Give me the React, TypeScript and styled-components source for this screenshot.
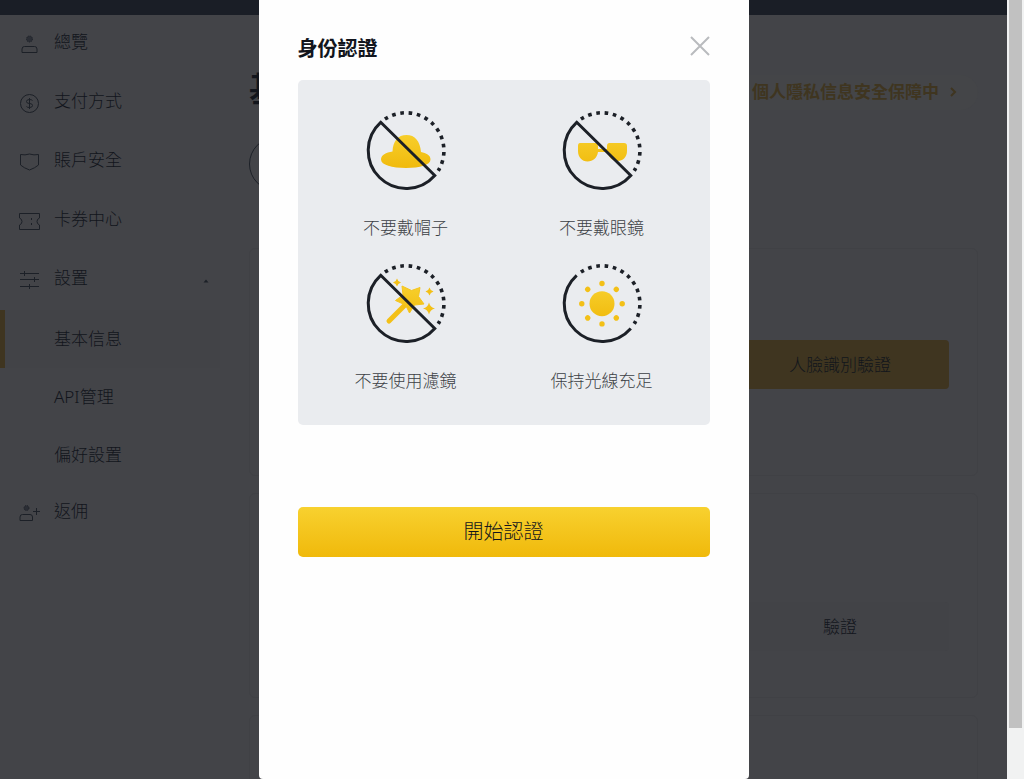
import React from "react";
import styled, { createGlobalStyle } from "styled-components";

const GlobalStyle = createGlobalStyle`
  * { box-sizing: border-box; }
  body {
    margin: 0;
    background: #434448;
    color: #12151c;
    font-family: "Noto Sans", "Noto Sans CJK TC", sans-serif;
    font-size: 17px;
    font-weight: 300;
    line-height: 24px;
  }
  button { font: inherit; color: inherit; border: 0; padding: 0; cursor: pointer; }
`;

const Shell = styled.div`
  display: flex;
  height: 100vh;
  overflow: hidden;
`;

const Page = styled.div`
  position: relative;
  flex: 1;
  min-width: 0;
  overflow: hidden;
`;

const ScrollTrack = styled.div`
  flex: none;
  width: 17px;
  padding: 0 2px;
  background: #f1f2f2;
`;

const ScrollThumb = styled.div`
  width: 13px;
  height: 93.5%;
  background: #c1c1c1;
`;

const TopBar = styled.header`
  height: 15px;
  background: #1a1e26;
`;

const Body = styled.div`
  display: flex;
`;

const Sidebar = styled.nav`
  flex: none;
  width: 220px;
`;

const NavLink = styled.a`
  display: flex;
  align-items: center;
  gap: 14px;
  height: 59px;
  padding: 0 10px 0 19px;
  color: inherit;
  text-decoration: none;
`;

const NavText = styled.span`
  flex: 1;
  padding-bottom: 6px;
`;

const SubLink = styled.a<{ $active?: boolean }>`
  display: flex;
  align-items: center;
  height: 58px;
  padding-left: 49px;
  border-left: 5px solid ${(p) => (p.$active ? "#3f3520" : "transparent")};
  background: ${(p) => (p.$active ? "#424347" : "transparent")};
  color: inherit;
  text-decoration: none;
`;

const Main = styled.main`
  flex: 1;
  min-width: 0;
  padding: 60px 29px 0;
`;

const Heading = styled.div`
  display: flex;
  align-items: flex-start;
  justify-content: space-between;
  height: 35px;
`;

const PageTitle = styled.h1`
  margin: 0;
  font-size: 34px;
  font-weight: 700;
  line-height: 28px;
`;

const SafetyLink = styled.a`
  display: flex;
  align-items: center;
  gap: 9px;
  height: 35px;
  padding: 0 20px 2px;
  border-radius: 18px;
  background: #444548;
  color: #3f3520;
  font-weight: 700;
  text-decoration: none;
`;

const Avatar = styled.div`
  width: 54px;
  height: 54px;
  margin: 27px 0 57px;
  border: 1px solid #1c2027;
  border-radius: 50%;
`;

const Card = styled.section<{ $height: number; $top: number }>`
  display: flex;
  justify-content: flex-end;
  align-items: flex-start;
  height: ${(p) => p.$height}px;
  margin-bottom: 17px;
  padding: ${(p) => p.$top}px 28px 0;
  border: 1px solid #404145;
  border-radius: 6px;
`;

const CardButton = styled.button<{ $gold?: boolean }>`
  width: 218px;
  height: 49px;
  border-radius: 4px;
  background: ${(p) => (p.$gold ? "#3f3520" : "#424347")};
`;

const Backdrop = styled.div`
  position: absolute;
  inset: 0;
  display: flex;
  justify-content: center;
`;

const Dialog = styled.div`
  width: 490px;
  max-width: 100%;
  padding: 34px 39px;
  border-radius: 0 0 4px 4px;
  background: #fefefe;
`;

const DialogHead = styled.div`
  display: flex;
  justify-content: space-between;
  align-items: flex-start;
  height: 46px;
`;

const DialogTitle = styled.h2`
  margin: 0;
  font-size: 20px;
  font-weight: 700;
  line-height: 30px;
`;

const CloseButton = styled.button`
  display: flex;
  height: 24px;
  align-items: center;
  background: none;
`;

const Tips = styled.ul`
  display: grid;
  grid-template-columns: 1fr 1fr;
  row-gap: 23px;
  margin: 0;
  padding: 30px 10px 32px;
  border-radius: 5px;
  background: #eaecef;
  list-style: none;
`;

const Tip = styled.li`
  display: flex;
  flex-direction: column;
  align-items: center;
  gap: 26px;
  color: #3c3f45;
`;

const StartButton = styled.button`
  width: 100%;
  height: 50px;
  margin-top: 82px;
  border-radius: 5px;
  background: linear-gradient(#f8d12f, #f0b90b);
  font-size: 20px;
`;

type TipKind = "hat" | "glasses" | "filter" | "light";

const spark = (x: number, y: number, r: number) =>
  `M${x} ${y - r}Q${x + r * 0.2} ${y - r * 0.2} ${x + r} ${y}Q${x + r * 0.2} ${y + r * 0.2} ${x} ${y + r}Q${x - r * 0.2} ${y + r * 0.2} ${x - r} ${y}Q${x - r * 0.2} ${y - r * 0.2} ${x} ${y - r}Z`;

const HALF_RING = "M68.8 65.5A38 38 0 1 1 14.7 12.3";

function TipArt({ kind }: { kind: TipKind }) {
  const fill = `url(#gold-${kind})`;
  return (
    <svg width="80" height="80" viewBox="0 0 80 80" fill="none" overflow="visible" aria-hidden="true">
      <defs>
        <linearGradient id={`gold-${kind}`} x1="40" y1="20" x2="40" y2="60" gradientUnits="userSpaceOnUse">
          <stop stopColor="#f8d12f" />
          <stop offset="1" stopColor="#f0b90b" />
        </linearGradient>
      </defs>
      {kind === "hat" && (
        <path fill={fill} d="M26.500 41.500C27 31 32 25 40.500 25C49 25 54 31 55 42C60 43 64.500 45 64.500 49.500C64.500 55 54 58 40 58C26 58 15 55 15 49.500C15 45 20 42.500 26.500 41.500Z" />
      )}
      {kind === "glasses" && (
        <path fill={fill} d="M18 33H33.500Q36 33 36 36V39H45V36Q45 33 47.500 33H62Q65 33 65 36V41C65 47 61 51 55.500 51C50 51 46.500 47 45.500 42H36C35 48 31 51.500 25.500 51.500C20 51.500 16 47 16 41V36Q16 33 18 33Z" />
      )}
      {kind === "filter" && (
        <>
          <path stroke="#f3c017" strokeWidth="5" strokeLinecap="round" d="M23 58L42 39" />
          <path
            fill={fill}
            stroke="#f5c51d"
            strokeWidth="1"
            strokeLinejoin="round"
            d="M36 23L45.500 27.500L54 24.500L52.500 33.500L58 41L48.500 42L43.500 50L39.500 42L29.500 37.500L37 32Z"
          />
          <path fill="#f3c017" d={spark(31, 19.5, 4) + spark(63.5, 28.5, 4) + spark(63, 45.5, 6)} />
        </>
      )}
      {kind === "light" && (
        <>
          <circle cx="40" cy="40.700" r="12.500" fill={fill} />
          {[0, 45, 90, 135, 180, 225, 270, 315].map((a) => (
            <circle key={a} cx="40" cy="20.500" r="2.700" fill="#f3c017" transform={`rotate(${a} 40 40.700)`} />
          ))}
        </>
      )}
      <path d={kind === "light" ? HALF_RING : HALF_RING + "Z"} stroke="#1c2027" strokeWidth="3" />
      <path d="M18.900 9.100A38 38 0 0 1 72.200 60.800" stroke="#1c2027" strokeWidth="3.600" strokeDasharray="3.600 4.700" />
    </svg>
  );
}

type NavKind = "user" | "coin" | "shield" | "ticket" | "sliders" | "invite";

const NAV_PATHS: Record<NavKind, React.ReactNode> = {
  user: (
    <>
      <circle cx="10.500" cy="5" r="3" fill="#2b2e35" strokeDasharray="1 1" />
      <path d="M3 18.500V15Q3 12.500 5.500 12.500H15.500Q18 12.500 18 15V18.500Z" />
    </>
  ),
  coin: (
    <>
      <circle cx="10.500" cy="10.500" r="9" />
      <path d="M13.500 7.500Q12.500 6.500 10.500 6.500Q7.500 6.500 7.500 8.500Q7.500 10.500 10.500 10.500Q13.500 10.500 13.500 12.500Q13.500 14.500 10.500 14.500Q8 14.500 7.500 13.500M10.500 5V16" />
    </>
  ),
  shield: <path d="M1.500 2.500Q6 3.500 10.500 2Q15 3.500 19.500 2.500V13Q16 16 10.500 18Q5 16 1.500 13Z" />,
  ticket: (
    <path d="M0.500 2.500H20.500V7Q18 8 18 10.500Q18 13 20.500 14V18.500H0.500V14Q3 13 3 10.500Q3 8 0.500 7ZM12.500 7V9M12.500 12V14" />
  ),
  sliders: <path d="M1 3.500H20M1 9.500H20M1 16.500H20M5.500 1V6M15.500 7V12M10.500 14V19" />,
  invite: (
    <>
      <circle cx="7.500" cy="5" r="2.500" fill="#2b2e35" strokeDasharray="1 1" />
      <path d="M1 17.500V14Q1 11.500 3.500 11.500H11Q13.500 11.500 13.500 14V17.500ZM14 8.500H21M17.500 5V12" />
    </>
  ),
};

function NavIcon({ kind }: { kind: NavKind }) {
  return (
    <svg width="21" height="21" viewBox="0 0 21 21" fill="none" stroke="#1c2027" strokeWidth="1" aria-hidden="true">
      {NAV_PATHS[kind]}
    </svg>
  );
}

const NAV: { kind: NavKind; label: string }[] = [
  { kind: "user", label: "總覽" },
  { kind: "coin", label: "支付方式" },
  { kind: "shield", label: "賬戶安全" },
  { kind: "ticket", label: "卡券中心" },
];

const SUB_NAV = ["基本信息", "API管理", "偏好設置"];

const TIPS: { kind: TipKind; label: string }[] = [
  { kind: "hat", label: "不要戴帽子" },
  { kind: "glasses", label: "不要戴眼鏡" },
  { kind: "filter", label: "不要使用濾鏡" },
  { kind: "light", label: "保持光線充足" },
];

export default function App() {
  return (
    <Shell>
      <GlobalStyle />
      <Page>
        <TopBar />
        <Body>
          <Sidebar>
            {NAV.map((item) => (
              <NavLink href="#" key={item.kind}>
                <NavIcon kind={item.kind} />
                <NavText>{item.label}</NavText>
              </NavLink>
            ))}
            <NavLink href="#">
              <NavIcon kind="sliders" />
              <NavText>設置</NavText>
              <svg width="8" height="6" viewBox="0 0 8 6" fill="#1c2027" aria-hidden="true">
                <path d="M1.500 4.500L4 1.500L6.500 4.500Z" />
              </svg>
            </NavLink>
            {SUB_NAV.map((label, i) => (
              <SubLink href="#" key={label} $active={i === 0}>
                {label}
              </SubLink>
            ))}
            <NavLink href="#">
              <NavIcon kind="invite" />
              <NavText>返佣</NavText>
            </NavLink>
          </Sidebar>
          <Main>
            <Heading>
              <PageTitle>基</PageTitle>
              <SafetyLink href="#">
                個人隱私信息安全保障中
                <svg width="10" height="10" viewBox="0 0 10 10" fill="none" stroke="#3f3520" strokeWidth="2" aria-hidden="true">
                  <path d="M3 1L7 5L3 9" />
                </svg>
              </SafetyLink>
            </Heading>
            <Avatar />
            <Card $height={228} $top={91}>
              <CardButton $gold>人臉識別驗證</CardButton>
            </Card>
            <Card $height={205} $top={108}>
              <CardButton>驗證</CardButton>
            </Card>
            <Card $height={205} $top={108} />
          </Main>
        </Body>
        <Backdrop>
          <Dialog role="dialog" aria-modal="true" aria-labelledby="verify-title">
            <DialogHead>
              <DialogTitle id="verify-title">身份認證</DialogTitle>
              <CloseButton aria-label="關閉">
                <svg width="20" height="20" viewBox="0 0 20 20" stroke="#b9bbbe" strokeWidth="2" aria-hidden="true">
                  <path d="M1 1L19 19M19 1L1 19" />
                </svg>
              </CloseButton>
            </DialogHead>
            <Tips>
              {TIPS.map((tip) => (
                <Tip key={tip.kind}>
                  <TipArt kind={tip.kind} />
                  {tip.label}
                </Tip>
              ))}
            </Tips>
            <StartButton>開始認證</StartButton>
          </Dialog>
        </Backdrop>
      </Page>
      <ScrollTrack>
        <ScrollThumb />
      </ScrollTrack>
    </Shell>
  );
}
